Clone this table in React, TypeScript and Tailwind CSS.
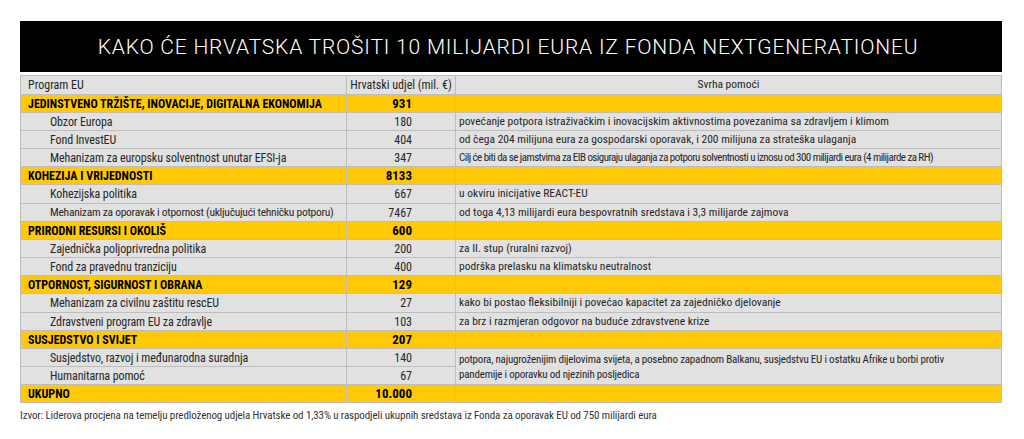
import React from "react";

type Row =
  | { kind: "cat"; name: string; value: string }
  | { kind: "item"; name: string; value: string; desc?: string; descClass?: string; nameClass?: string; span?: boolean; skip?: boolean };

const rows: Row[] = [
  { kind: "cat", name: "JEDINSTVENO TRŽIŠTE, INOVACIJE, DIGITALNA EKONOMIJA", value: "931" },
  { kind: "item", name: "Obzor Europa", value: "180", desc: "povećanje potpora istraživačkim i inovacijskim aktivnostima povezanima sa zdravljem i klimom" },
  { kind: "item", name: "Fond InvestEU", value: "404", desc: "od čega 204 milijuna eura za gospodarski oporavak, i 200 milijuna za strateška ulaganja" },
  {
    kind: "item",
    name: "Mehanizam za europsku solventnost unutar EFSI-ja",
    value: "347",
    desc: "Cilj će biti  da se jamstvima za EIB osiguraju ulaganja za potporu solventnosti u iznosu od 300 milijardi eura (4 milijarde za RH)",
    descClass: "small",
  },
  { kind: "cat", name: "KOHEZIJA I VRIJEDNOSTI", value: "8133" },
  { kind: "item", name: "Kohezijska politika", value: "667", desc: "u okviru inicijative REACT-EU" },
  {
    kind: "item",
    name: "Mehanizam za oporavak i otpornost (uključujući tehničku potporu)",
    value: "7467",
    desc: "od toga 4,13 milijardi eura bespovratnih sredstava i 3,3 milijarde zajmova",
    nameClass: "tight",
  },
  { kind: "cat", name: "PRIRODNI RESURSI I OKOLIŠ", value: "600" },
  { kind: "item", name: "Zajednička poljoprivredna politika", value: "200", desc: "za II. stup (ruralni razvoj)" },
  { kind: "item", name: "Fond za pravednu tranziciju", value: "400", desc: "podrška prelasku na klimatsku neutralnost" },
  { kind: "cat", name: "OTPORNOST, SIGURNOST I OBRANA", value: "129" },
  { kind: "item", name: "Mehanizam za civilnu zaštitu rescEU", value: "27", desc: "kako bi postao fleksibilniji i povećao kapacitet za zajedničko djelovanje" },
  { kind: "item", name: "Zdravstveni program EU za zdravlje", value: "103", desc: "za brz i razmjeran odgovor na buduće zdravstvene krize" },
  { kind: "cat", name: "SUSJEDSTVO I SVIJET", value: "207" },
  { kind: "item", name: "Susjedstvo, razvoj i međunarodna suradnja", value: "140", span: true },
  { kind: "item", name: "Humanitarna pomoć", value: "67", skip: true },
  { kind: "cat", name: "UKUPNO", value: "10.000" },
];

export default function App() {
  return (
    <div className="w-[1024px] h-[439px] bg-white pt-[21px] pl-[20px] pr-[22px] font-['Liberation_Sans_Narrow','Roboto_Condensed','Arial_Narrow',sans-serif] text-[#262626]">
      <div className="h-[51px] bg-black flex items-center justify-center">
        <h1 className="font-['Roboto',sans-serif] font-light text-[21px] tracking-[0.8px] text-white leading-none pt-[1px] pr-[6px]">
          KAKO ĆE HRVATSKA TROŠITI 10 MILIJARDI EURA IZ FONDA NEXTGENERATIONEU
        </h1>
      </div>
      <div className="mt-[3px] grid grid-cols-[325px_108px_1fr] gap-px bg-[#bdbdbd] p-px text-[12px] leading-none">
        <div className="h-[18px] bg-[#e1e1e1] flex items-center pl-[7px]">Program EU</div>
        <div className="h-[18px] bg-[#e1e1e1] flex items-center justify-center">Hrvatski udjel (mil. €)</div>
        <div className="h-[18px] bg-[#e1e1e1] flex items-center justify-center text-[11.5px]">Svrha pomoći</div>
        {rows.map((r, i) => {
          const h = i % 6 === 5 ? "h-[18px]" : "h-[17px]";
          if (r.kind === "cat") {
            return (
              <React.Fragment key={i}>
                <div className={`${h} bg-[#ffc905] flex items-center pl-[7px] font-bold text-black whitespace-nowrap`}>{r.name}</div>
                <div className={`${h} bg-[#ffc905] flex items-center justify-end pr-[43px] font-bold text-black text-[13px]`}>{r.value}</div>
                <div className={`${h} bg-[#ffc905]`}></div>
              </React.Fragment>
            );
          }
          return (
            <React.Fragment key={i}>
              <div
                className={`${h} bg-[#e1e1e1] flex items-center pl-[29px] whitespace-nowrap ${
                  r.nameClass === "tight" ? "text-[11.5px] tracking-[-0.25px]" : "tracking-[-0.1px]"
                }`}
              >
                {r.name}
              </div>
              <div className={`${h} bg-[#e1e1e1] flex items-center justify-end pr-[43px]`}>{r.value}</div>
              {r.skip ? null : r.span ? (
                <div className="row-span-2 bg-[#e1e1e1] flex items-center pl-[3px] pr-[4px] text-[11px] leading-[15px] tracking-[-0.2px] whitespace-nowrap">
                  <span>
                    potpora, najugroženijim dijelovima svijeta, a posebno zapadnom Balkanu, susjedstvu EU i ostatku Afrike u borbi protiv
                    <br />
                    pandemije i oporavku od njezinih posljedica
                  </span>
                </div>
              ) : (
                <div
                  className={`${h} bg-[#e1e1e1] flex items-center pl-[3px] whitespace-nowrap ${
                    r.descClass === "small" ? "text-[11px] tracking-[-0.55px]" : "text-[11.5px]"
                  }`}
                >
                  {r.desc}
                </div>
              )}
            </React.Fragment>
          );
        })}
      </div>
      <div className="mt-[7px] text-[11px] leading-none text-[#333] tracking-[-0.1px]">
        Izvor: Liderova procjena na temelju predloženog udjela Hrvatske od 1,33% u raspodjeli ukupnih sredstava iz Fonda za oporavak EU od 750 milijardi eura
      </div>
    </div>
  );
}
